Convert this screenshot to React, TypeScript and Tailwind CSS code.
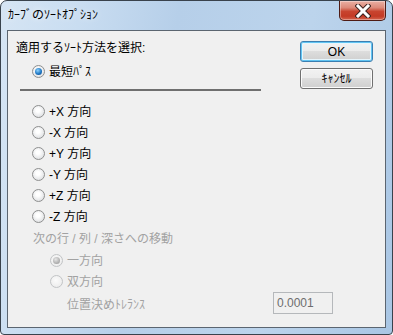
import React from "react";

const font = "font-['Liberation_Sans','Noto_Sans_CJK_JP',sans-serif]";

type RadioProps = { label: string; checked?: boolean; disabled?: boolean; className?: string };

function Radio({ label, checked, disabled, className }: RadioProps) {
  return (
    <div className={`flex h-[21px] items-center ${className ?? ""}`}>
      <span
        className={
          disabled
            ? "flex h-[13px] w-[13px] items-center justify-center rounded-full border border-[#c2c4c6] bg-[radial-gradient(circle_at_45%_40%,#fbfbfb,#e8e8e8)]"
            : "flex h-[13px] w-[13px] items-center justify-center rounded-full border border-[#8e8f8f] bg-[radial-gradient(circle_at_45%_40%,#ffffff_20%,#d3d5d8)]"
        }
      >
        {checked &&
          (disabled ? (
            <span className="h-[7px] w-[7px] rounded-full bg-[radial-gradient(circle_at_40%_35%,#e6e6e6,#a9a9a9_70%,#8d8d8d)]" />
          ) : (
            <span className="h-[7px] w-[7px] rounded-full bg-[radial-gradient(circle_at_40%_35%,#8fd3ff,#1f78c4_55%,#0b3f80)]" />
          ))}
      </span>
      <span className={`ml-[4px] text-[12px] leading-[16px] ${disabled ? "text-[#a2a2a2]" : "text-black"}`}>
        {label}
      </span>
    </div>
  );
}

function CloseButton() {
  return (
    <div className="flex h-[20px] w-[47px] items-center justify-center rounded-b-[5px] border border-t-0 border-[#4e1b14] bg-[linear-gradient(to_bottom,#eab0a4_0%,#dc8a7a_35%,#c8442f_55%,#c33a25_80%,#d4654f_100%)] shadow-[inset_0_0_0_1px_rgba(255,255,255,0.35)]">
      <svg width="16" height="14" viewBox="0 0 16 14">
        <path d="M3 2 L13 12 M13 2 L3 12" stroke="#3b2320" strokeWidth="5" strokeLinecap="square" />
        <path d="M3 2 L13 12 M13 2 L3 12" stroke="#ffffff" strokeWidth="3" strokeLinecap="square" />
      </svg>
    </div>
  );
}

function WinButton({ label, focused }: { label: string; focused?: boolean }) {
  return (
    <button
      className={`flex h-[21px] w-[73px] items-center justify-center rounded-[3px] border text-[12px] text-black bg-[linear-gradient(to_bottom,#f2f2f2_0%,#ebebeb_49%,#dddddd_50%,#cfcfcf_100%)] ${
        focused
          ? "border-[#3c7fb1] shadow-[inset_0_0_0_1px_#61c4f2,inset_0_0_0_2px_#e6f5fc]"
          : "border-[#707070] shadow-[inset_0_0_0_1px_#fbfbfb]"
      }`}
    >
      {label}
    </button>
  );
}

export default function App() {
  return (
    <div className={`h-[335px] w-[393px] bg-white ${font}`}>
      <div className="flex h-full w-full flex-col rounded-t-[7px] rounded-b-[4px] border border-[#39424c] bg-[linear-gradient(100deg,#d6e5f4_0%,#c9ddf1_18%,#b6cfe9_40%,#bcd4ec_70%,#a9c6e4_100%)]">
        <div className="flex h-[29px] items-start justify-between pl-[7px] pr-[6px]">
          <span className="pt-[6px] text-[12px] leading-[16px] text-black [text-shadow:0_0_6px_rgba(255,255,255,0.9)]">
            ｶｰﾌﾞのｿｰﾄｵﾌﾟｼｮﾝ
          </span>
          <CloseButton />
        </div>
        <div className="mx-[6px] mb-[6px] flex flex-1 border border-[#5b6570] bg-[#f0f0f0]">
          <div className="flex flex-1 flex-col pl-[8px] pt-[9px]">
            <div className="h-[16px] text-[12px] leading-[16px] text-black">適用するｿｰﾄ方法を選択:</div>
            <Radio label="最短ﾊﾟｽ" checked className="ml-[16px] mt-[5px]" />
            <div className="ml-[4px] mt-[7px] h-[2px] w-[241px] bg-[#6f6f6f]" />
            <div className="ml-[16px] mt-[10px] flex flex-col">
              <Radio label="+X 方向" />
              <Radio label="-X 方向" />
              <Radio label="+Y 方向" />
              <Radio label="-Y 方向" />
              <Radio label="+Z 方向" />
              <Radio label="-Z 方向" />
            </div>
            <div className="ml-[17px] mt-[4px] h-[16px] text-[12px] leading-[16px] text-[#a2a2a2]">
              次の行 / 列 / 深さへの移動
            </div>
            <Radio label="一方向" checked disabled className="ml-[34px] mt-[3px]" />
            <Radio label="双方向" disabled className="ml-[34px] h-[19px]" />
            <div className="flex h-[22px] items-center">
              <span className="ml-[51px] pt-[3px] text-[12px] leading-[16px] text-[#a2a2a2]">位置決めﾄﾚﾗﾝｽ</span>
              <div className="ml-auto mr-[-33px] flex h-[22px] w-[60px] items-center border border-[#b5b8bb] bg-[#f0f0f0] pl-[3px] text-[12px] text-[#6d6d6d]">
                0.0001
              </div>
            </div>
          </div>
          <div className="mr-[12px] flex w-[73px] flex-col gap-[6px] pt-[10px]">
            <WinButton label="OK" focused />
            <WinButton label="ｷｬﾝｾﾙ" />
          </div>
        </div>
      </div>
    </div>
  );
}
